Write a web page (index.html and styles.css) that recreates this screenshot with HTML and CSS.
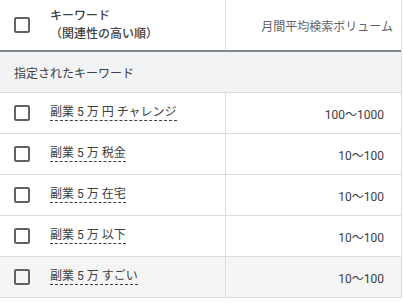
FILE: index.html
```html
<!DOCTYPE html>
<html lang="ja">
<head>
  <meta charset="UTF-8">
  <title>キーワード</title>
  <link rel="stylesheet" href="styles.css">
</head>
<body>
  <div class="kw-table">
    <div class="row head">
      <div class="cell check"><span class="box"></span></div>
      <div class="cell kw-head">キーワード<br>（関連性の高い順）</div>
      <div class="cell vol-head">月間平均検索ボリューム</div>
    </div>
    <div class="row group">
      <div class="group-name">指定されたキーワード</div>
    </div>
    <div class="row">
      <div class="cell check"><span class="box"></span></div>
      <div class="cell kw"><span class="link">副業 5 万 円 チャレンジ</span></div>
      <div class="cell vol">100〜1000</div>
    </div>
    <div class="row">
      <div class="cell check"><span class="box"></span></div>
      <div class="cell kw"><span class="link">副業 5 万 税金</span></div>
      <div class="cell vol">10〜100</div>
    </div>
    <div class="row">
      <div class="cell check"><span class="box"></span></div>
      <div class="cell kw"><span class="link">副業 5 万 在宅</span></div>
      <div class="cell vol">10〜100</div>
    </div>
    <div class="row">
      <div class="cell check"><span class="box"></span></div>
      <div class="cell kw"><span class="link">副業 5 万 以下</span></div>
      <div class="cell vol">10〜100</div>
    </div>
    <div class="row hover">
      <div class="cell check"><span class="box"></span></div>
      <div class="cell kw"><span class="link">副業 5 万 すごい</span></div>
      <div class="cell vol">10〜100</div>
    </div>
  </div>
</body>
</html>
```
FILE: styles.css
```css
body {
  margin: 0;
  font-family: Roboto, "Noto Sans CJK JP", sans-serif;
  font-size: 12px;
  color: #3c4043;
  background-color: #fff;
}
.kw-table {
  width: 401px;
  border-right: 1px solid #dadce0;
}
.row {
  display: grid;
  grid-template-columns: 50px 175px 1fr;
  height: 40px;
  border-bottom: 1px solid #dadce0;
}
.row.head {
  height: 50px;
  border-bottom: 2px solid #80868b;
}
.row.hover {
  background-color: #f5f5f5;
}
.cell {
  display: flex;
  align-items: center;
}
.check {
  padding-left: 14px;
}
.box {
  width: 12px;
  height: 12px;
  border: 2px solid #5f6368;
  border-radius: 2px;
}
.kw-head {
  font-weight: 500;
  line-height: 18px;
  padding-bottom: 1px;
}
.vol-head {
  justify-content: flex-end;
  padding-right: 8px;
  border-left: 1px solid #dadce0;
  color: #5f6368;
}
.row.group {
  display: flex;
  align-items: center;
  background-color: #f1f3f4;
}
.group-name {
  padding-left: 14px;
}
.link {
  border-bottom: 1px dashed #3c4043;
  line-height: 15px;
}
.vol {
  justify-content: flex-end;
  padding-right: 17px;
  border-left: 1px solid #dadce0;
}
```
